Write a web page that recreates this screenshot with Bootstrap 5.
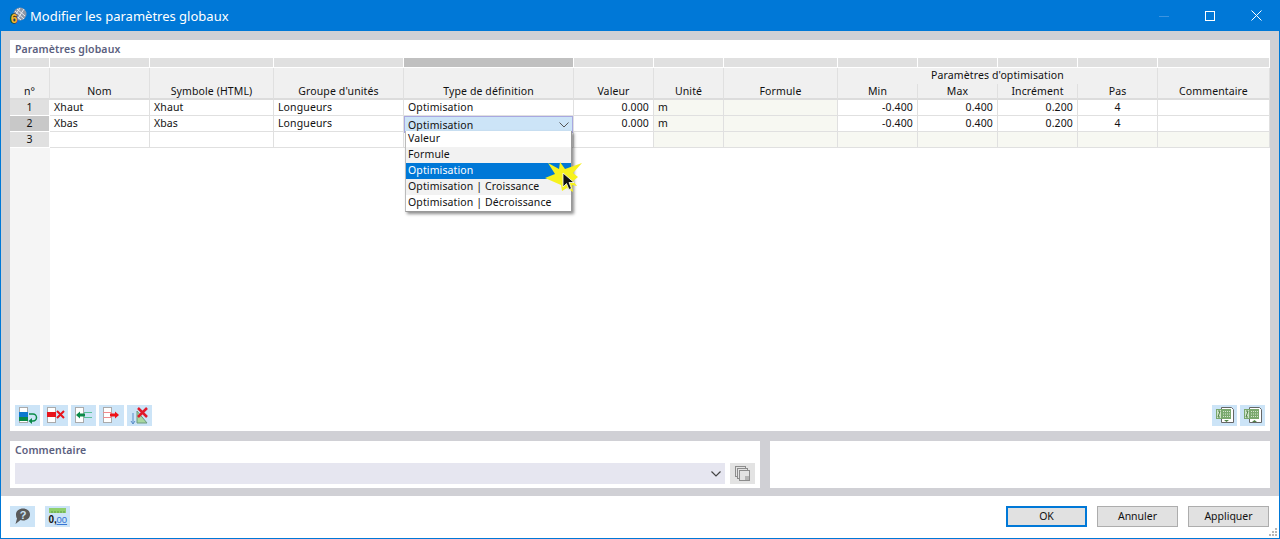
<!DOCTYPE html>
<html lang="fr">
<head>
<meta charset="utf-8">
<title>Modifier les paramètres globaux</title>
<link href="https://cdn.jsdelivr.net/npm/bootstrap@5.3.0/dist/css/bootstrap.min.css" rel="stylesheet">
<style>
html,body{height:100%;overflow:hidden;background:#fff}
body{font-family:"Noto Sans","Liberation Sans",sans-serif;font-size:10.5px;line-height:14px;letter-spacing:.12px;color:#111}
.win{height:539px;border:1px solid #0078d7;border-top:0}
.ttl{height:31px;background:#0078d7;color:#fff;margin:0 -1px;padding-left:9px;font-size:13px;letter-spacing:0}
.ttl-txt{margin-left:3px}
.ctl{width:46px;height:31px}
.ctl-wrap{margin-right:1px}
.work{background:#d0d0d5;padding:9px 9px 8px 9px}
.pnl{background:#fff}
.main-pnl{height:391px}
.sec{height:18px;padding:2px 5px 0;font-weight:600;color:#5b607e;font-size:10.5px}
.grid-t{width:1260px;table-layout:fixed;border-collapse:separate;border-spacing:0}
.grid-t th,.grid-t td{padding:0 4px 1px;height:16px;border-right:1px solid #e0e0e0;border-bottom:1px solid #e0e0e0;white-space:nowrap;font-weight:400;overflow:visible}
.grid-t .lt th{height:10px;background:#e0e0e0;border-right:1px solid #fff;border-bottom:1px solid #fff;padding:0}
.grid-t .lt th.hot{background:#c0c0c0}
.grid-t thead th{background:#f0f0f0;text-align:center;vertical-align:bottom;padding-bottom:2px}
.grid-t .r1 th{border-bottom:0}
.grid-t th.sub,.grid-t .r1 th.tall{border-bottom:2px solid #dcdcdc;padding-bottom:0}
.grid-t tbody th{background:#e0e0e0;text-align:center;border-right:1px solid #fff;border-bottom:1px solid #fff;padding:0 0 1px}
.grid-t tbody th.cur{background:#c8c8c8}
.grid-t td.tint{background:#f7f8f2}
.grid-t tbody th.fill{background:#f5f5f5;border:0}
.grid-t td.blank{border:0;height:242px}
.grid-t td.edit{position:relative;padding:0}
.editor{position:absolute;left:0;top:0;right:0;height:17px;background:#cce4f7;border:1px solid #a8a8e0;padding:0 3px;z-index:2}
.drop{display:block;position:absolute;left:1px;top:15px;width:167px;min-width:0;margin:0;padding:0;border:0;border-right:1px solid #999;border-left:1px solid #bbb;border-bottom:1px solid #999;border-radius:0;box-shadow:2px 2px 3px rgba(0,0,0,.45);font-size:10.5px;z-index:3;background:#fff}
.drop .dropdown-item{padding:0 2px;height:16px;line-height:15px;color:#111;font-size:10.5px}
.drop .dropdown-item.alt{background:#f2f2f2}
.drop .dropdown-item.active{background:#0078d7;color:#fff}
.burst{position:absolute;left:140px;top:46px;z-index:4;width:42px;height:34px}
.tools{height:41px;padding:15px 5px 4px}
.tgap{gap:3px}
.tb{width:25px;height:21px;padding:0;border:0;border-radius:0;background:#cce4f7;display:block}
.tb svg{display:block}
.low{margin-top:10px;height:47px}
.low-a{width:750px}
.low-b{width:500px;margin-left:10px}
.low-row{padding-left:5px;margin-top:4px}
.combo{width:710px;height:21px;background:#e6e6f0;padding-right:4px}
.gb{width:25px;height:21px;background:#e3e3e3;margin-left:5px}
.foot{height:42px;padding:10px 10px 0 9px;position:relative}
.fgap{gap:10px}
.act{width:81px;height:21px;padding:0;border:1px solid #adadad;border-radius:0;background:#e1e1e1;color:#111;font-size:10.5px;line-height:17px}
.act.def{border:2px solid #0078d7}
.grip{position:absolute;right:1px;bottom:1px}
</style>
</head>
<body>
<div class="win d-flex flex-column">
  <div class="ttl d-flex align-items-center">
    <svg width="18" height="18" viewBox="0 0 18 18"><circle cx="11" cy="7" r="6.500" fill="#8f98a8"/><path d="M6 4l9 8M8 2l8 7M5 7l7 6M11 1l-6 9M15 2l-7 11" stroke="#e8ecf2" stroke-width="1" fill="none"/><text x="5" y="16" text-anchor="middle" font-size="12" font-weight="700" fill="#f5b92d" stroke="#3a3a30" stroke-width="1.500" paint-order="stroke" font-family="Liberation Sans">6</text></svg>
    <span class="ttl-txt">Modifier les paramètres globaux</span>
    <div class="ms-auto d-flex ctl-wrap">
      <div class="ctl d-flex align-items-center justify-content-center"><svg width="10" height="10"><path d="M0 5.500h10" stroke="#3c94e0"/></svg></div>
      <div class="ctl d-flex align-items-center justify-content-center"><svg width="10" height="10"><rect x=".5" y=".5" width="9" height="9" fill="none" stroke="#fff"/></svg></div>
      <div class="ctl d-flex align-items-center justify-content-center"><svg width="11" height="11"><path d="M.5.5l10 10M10.500.5l-10 10" stroke="#fff"/></svg></div>
    </div>
  </div>
  <div class="work flex-grow-0">
    <div class="pnl main-pnl">
      <div class="sec">Paramètres globaux</div>
      <table class="grid-t">
        <colgroup><col style="width:40px"><col style="width:100px"><col style="width:124px"><col style="width:130px"><col style="width:170px"><col style="width:80px"><col style="width:70px"><col style="width:114px"><col style="width:80px"><col style="width:80px"><col style="width:80px"><col style="width:80px"><col style="width:112px"></colgroup>
        <thead>
          <tr class="lt"><th></th><th></th><th></th><th></th><th class="hot"></th><th></th><th></th><th></th><th></th><th></th><th></th><th></th><th></th></tr>
          <tr class="r1">
            <th rowspan="2" class="tall">n°</th><th rowspan="2" class="tall">Nom</th><th rowspan="2" class="tall">Symbole (HTML)</th><th rowspan="2" class="tall">Groupe d'unités</th><th rowspan="2" class="tall">Type de définition</th><th rowspan="2" class="tall">Valeur</th><th rowspan="2" class="tall">Unité</th><th rowspan="2" class="tall">Formule</th>
            <th colspan="4">Paramètres d'optimisation</th>
            <th rowspan="2" class="tall">Commentaire</th>
          </tr>
          <tr class="r2"><th class="sub">Min</th><th class="sub">Max</th><th class="sub">Incrément</th><th class="sub">Pas</th></tr>
        </thead>
        <tbody>
          <tr><th>1</th><td>Xhaut</td><td>Xhaut</td><td>Longueurs</td><td>Optimisation</td><td class="text-end">0.000</td><td class="tint">m</td><td class="tint"></td><td class="text-end">-0.400</td><td class="text-end">0.400</td><td class="text-end">0.200</td><td class="text-center">4</td><td></td></tr>
          <tr><th class="cur">2</th><td>Xbas</td><td>Xbas</td><td>Longueurs</td>
            <td class="edit">
              <div class="editor d-flex justify-content-between align-items-center"><span>Optimisation</span><svg width="10" height="6"><path d="M.5.500l4.500 4.500 4.500-4.500" fill="none" stroke="#555"/></svg></div>
              <div class="dropdown-menu drop show">
                <div class="dropdown-item">Valeur</div>
                <div class="dropdown-item alt">Formule</div>
                <div class="dropdown-item active">Optimisation</div>
                <div class="dropdown-item alt">Optimisation | Croissance</div>
                <div class="dropdown-item">Optimisation | Décroissance</div>
              </div>
              <svg class="burst" viewBox="0 0 42 34"><path d="M4 1L15 7 16 0 21 7 38 1 29 11 34 15 29 19 33 24 28 23 29 30 23 26 18 29 17 23 1 16 11 12Z" fill="#f7f21d"/><path d="M19 11v14l3.500-3.500 2.500 6 2.500-1-2.500-6h5Z" fill="#111" stroke="#fff" stroke-width=".8"/></svg>
            </td>
            <td class="text-end">0.000</td><td class="tint">m</td><td class="tint"></td><td class="text-end">-0.400</td><td class="text-end">0.400</td><td class="text-end">0.200</td><td class="text-center">4</td><td></td></tr>
          <tr><th>3</th><td></td><td></td><td></td><td></td><td></td><td class="tint"></td><td class="tint"></td><td class="tint"></td><td class="tint"></td><td class="tint"></td><td class="tint"></td><td class="tint"></td></tr>
          <tr><th class="fill"></th><td colspan="12" class="blank"></td></tr>
        </tbody>
      </table>
      <div class="tools d-flex">
        <div class="d-flex tgap">
          <button class="btn tb" aria-label="Insérer"><svg width="25" height="21"><rect x="4.500" y="2.500" width="8" height="15" fill="#fff" stroke="#aaa"/><rect x="4" y="7" width="9" height="5" fill="#0d78cf"/><rect x="4" y="12" width="9" height="4" fill="#0a8a48"/><path d="M14 9h4a3.500 3.500 0 0 1 0 7h-2" fill="none" stroke="#0a8a48" stroke-width="1.500"/><path d="M17 13l-3.500 3 3.500 3Z" fill="#0a8a48"/></svg></button>
          <button class="btn tb" aria-label="Supprimer"><svg width="25" height="21"><rect x="4.500" y="2.500" width="8" height="15" fill="#fff" stroke="#aaa"/><rect x="4" y="7" width="9" height="5" fill="#e8141c"/><path d="M14 6l7 7M21 6l-7 7" stroke="#e8141c" stroke-width="2"/></svg></button>
          <button class="btn tb" aria-label="Gauche"><svg width="25" height="21"><rect x="4.500" y="2.500" width="8" height="15" fill="#fff" stroke="#aaa"/><path d="M13 7.500h8M13 12.500h8" stroke="#5bbf98"/><rect x="8" y="8.500" width="6" height="3" fill="#0a8a48"/><path d="M9 6.500l-4 3.500 4 3.500Z" fill="#0a8a48"/></svg></button>
          <button class="btn tb" aria-label="Droite"><svg width="25" height="21"><rect x="4.500" y="2.500" width="8" height="15" fill="#fff" stroke="#aaa"/><path d="M4 7.500h9M4 12.500h9" stroke="#ef8a8e"/><rect x="11" y="8.500" width="6" height="3" fill="#f01018"/><path d="M16 6.500l4 3.500-4 3.500Z" fill="#f01018"/></svg></button>
          <button class="btn tb" aria-label="Effacer"><svg width="25" height="21"><path d="M6 8v11M4 16l2 3 2-3" fill="none" stroke="#5a8fc8"/><path d="M10 18V6l10 12Z" fill="#a8d8a0" stroke="#6a9a80"/><path d="M11 3l9 9M20 3l-9 9" stroke="#e01a2a" stroke-width="2.500"/></svg></button>
        </div>
        <div class="d-flex tgap ms-auto">
          <button class="btn tb" aria-label="Exporter"><svg width="25" height="21"><path d="M9.500 2.500h10l2 2v13h-12Z" fill="#fff" stroke="#666"/><rect x="4" y="4" width="15" height="10" fill="#7aa86e"/><rect x="5" y="5" width="4" height="8" fill="#cfe3c8"/><path d="M6 6h2L6 12h2" stroke="#4f8045" fill="none"/><path d="M11 6.500h7M11 9h7M11 11.500h7" stroke="#d6e6d0" stroke-dasharray="1 1"/><path d="M12 15h5l-2.500 2Z" fill="#4f8045"/></svg></button>
          <button class="btn tb" aria-label="Importer"><svg width="25" height="21"><path d="M9.500 2.500h10l2 2v13h-12Z" fill="#fff" stroke="#666"/><rect x="4" y="4" width="15" height="10" fill="#7aa86e"/><rect x="5" y="5" width="4" height="8" fill="#cfe3c8"/><path d="M6 6h2L6 12h2" stroke="#4f8045" fill="none"/><path d="M11 6.500h7M11 9h7M11 11.500h7" stroke="#d6e6d0" stroke-dasharray="1 1"/><path d="M12 17h5l-2.500-2Z" fill="#4f8045"/></svg></button>
        </div>
      </div>
    </div>
    <div class="low d-flex">
      <div class="pnl low-a">
        <div class="sec">Commentaire</div>
        <div class="d-flex low-row">
          <div class="combo d-flex align-items-center justify-content-end"><svg width="10" height="6"><path d="M.5.500l4.500 4.500 4.500-4.500" fill="none" stroke="#444" stroke-width="1.200"/></svg></div>
          <div class="gb d-flex align-items-center justify-content-center"><svg width="16" height="16"><rect x=".5" y=".5" width="10" height="10" fill="#e3e3e3" stroke="#8c8c8c"/><rect x="2.500" y="2.500" width="10" height="10" fill="#e3e3e3" stroke="#8c8c8c"/><rect x="4.500" y="4.500" width="10" height="10" fill="#e3e3e3" stroke="#8c8c8c"/><rect x="10" y="10" width="4" height="4" fill="#b5b5b5"/></svg></div>
        </div>
      </div>
      <div class="pnl low-b"></div>
    </div>
  </div>
  <div class="foot d-flex justify-content-between">
    <div class="d-flex fgap">
      <button class="btn tb" aria-label="Aide"><svg width="25" height="21"><path d="M13 2.500c4 0 7 2.500 7 6s-3 6-7 6c-1 0-2-.2-2.500-.5L5.500 18l1.500-5.500C6.300 11.500 6 10 6 8.500c0-3.500 3-6 7-6Z" fill="#5a5a5a"/><text x="13" y="12.500" text-anchor="middle" font-size="11" font-weight="700" fill="#cce4f7" font-family="Liberation Sans">?</text></svg></button>
      <button class="btn tb" aria-label="Unités"><svg width="25" height="21"><rect x="4" y="2" width="17" height="5" fill="#8fcf6e"/><path d="M7 5v2M10 5v2M13 5v2M16 5v2M19 5v2" stroke="#5f9f46"/><text x="3.500" y="17" font-size="10" font-weight="700" fill="#111" font-family="Liberation Sans">0,</text><text x="11.500" y="17" font-size="9.500" fill="#2d6fd2" text-decoration="underline" font-family="Liberation Sans">00</text></svg></button>
    </div>
    <div class="d-flex fgap">
      <button class="btn act def">OK</button>
      <button class="btn act">Annuler</button>
      <button class="btn act">Appliquer</button>
    </div>
    <svg class="grip" width="10" height="10"><path d="M7 1h2v2H7zM4 4h2v2H4zM7 4h2v2H7zM1 7h2v2H1zM4 7h2v2H4zM7 7h2v2H7z" fill="#b8b8b8"/></svg>
  </div>
</div>
</body>
</html>
